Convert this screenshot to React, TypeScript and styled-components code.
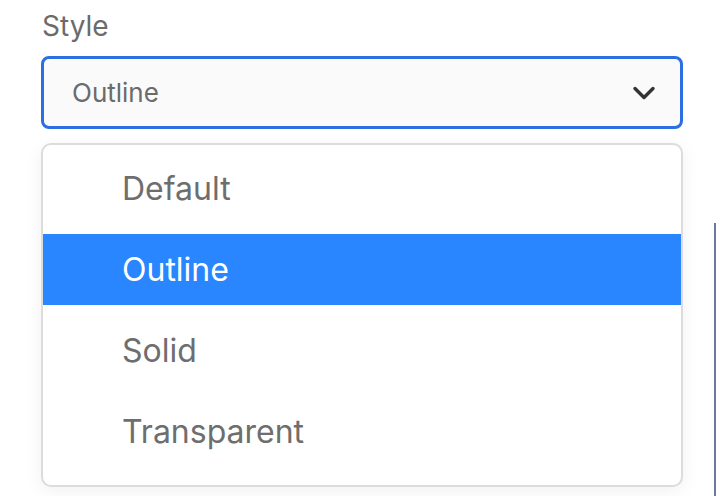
import { useState } from 'react'
import styled, { createGlobalStyle } from 'styled-components'

const GlobalStyle = createGlobalStyle`
  html, body {
    margin: 0;
    padding: 0;
    background: #ffffff;
  }
  body {
    font-family: Inter, "Noto Sans", "Liberation Sans", sans-serif;
    -webkit-font-smoothing: antialiased;
  }
`

const Page = styled.div`
  display: flex;
  width: 716px;
  height: 496px;
  overflow: hidden;
`
const Field = styled.div`
  display: flex;
  flex-direction: column;
  width: 642px;
  padding-left: 41px;
  padding-top: 8px;
`
const Label = styled.label`
  font-size: 28px;
  line-height: 36px;
  color: #6b6b6b;
  padding-left: 1px;
  margin-bottom: 12px;
`
const SelectBox = styled.button`
  display: flex;
  align-items: center;
  justify-content: space-between;
  box-sizing: border-box;
  width: 642px;
  height: 73px;
  padding: 0 24px 0 28px;
  border: 3px solid #2b6fe3;
  border-radius: 8px;
  background: #fafafa;
  font-family: inherit;
  font-size: 26px;
  color: #6b6b6b;
  cursor: pointer;
`
const Chevron = styled.svg`
  width: 24px;
  height: 16px;
`
const Menu = styled.ul`
  list-style: none;
  box-sizing: border-box;
  width: 642px;
  margin: 14px 0 0;
  padding: 8px 0 18px;
  display: flex;
  flex-direction: column;
  gap: 10px;
  border: 2px solid #dcdcdc;
  border-radius: 10px;
  background: #ffffff;
  box-shadow: 0 4px 18px rgba(0, 0, 0, 0.06);
  overflow: hidden;
`
const Option = styled.li<{ $active: boolean }>`
  display: flex;
  align-items: center;
  height: 71px;
  padding-left: 79px;
  font-size: 32px;
  color: ${p => (p.$active ? '#ffffff' : '#6e6e6e')};
  background: ${p => (p.$active ? '#2a86ff' : 'transparent')};
  cursor: pointer;
`
const Side = styled.div`
  margin-top: 223px;
  margin-left: auto;
  width: 0;
  border-left: 2px solid #6b7a99;
`

const options = ['Default', 'Outline', 'Solid', 'Transparent']

export default function App() {
  const [value, setValue] = useState('Outline')

  return (
    <Page>
      <GlobalStyle />
      <Field>
        <Label>Style</Label>
        <SelectBox type="button">
          {value}
          <Chevron viewBox="0 0 24 16" fill="none">
            <path
              d="M3 3.5l9 9 9-9"
              stroke="#333333"
              strokeWidth="3.4"
              strokeLinecap="round"
              strokeLinejoin="round"
            />
          </Chevron>
        </SelectBox>
        <Menu>
          {options.map(o => (
            <Option key={o} $active={o === value} onClick={() => setValue(o)}>
              {o}
            </Option>
          ))}
        </Menu>
      </Field>
      <Side />
    </Page>
  )
}
